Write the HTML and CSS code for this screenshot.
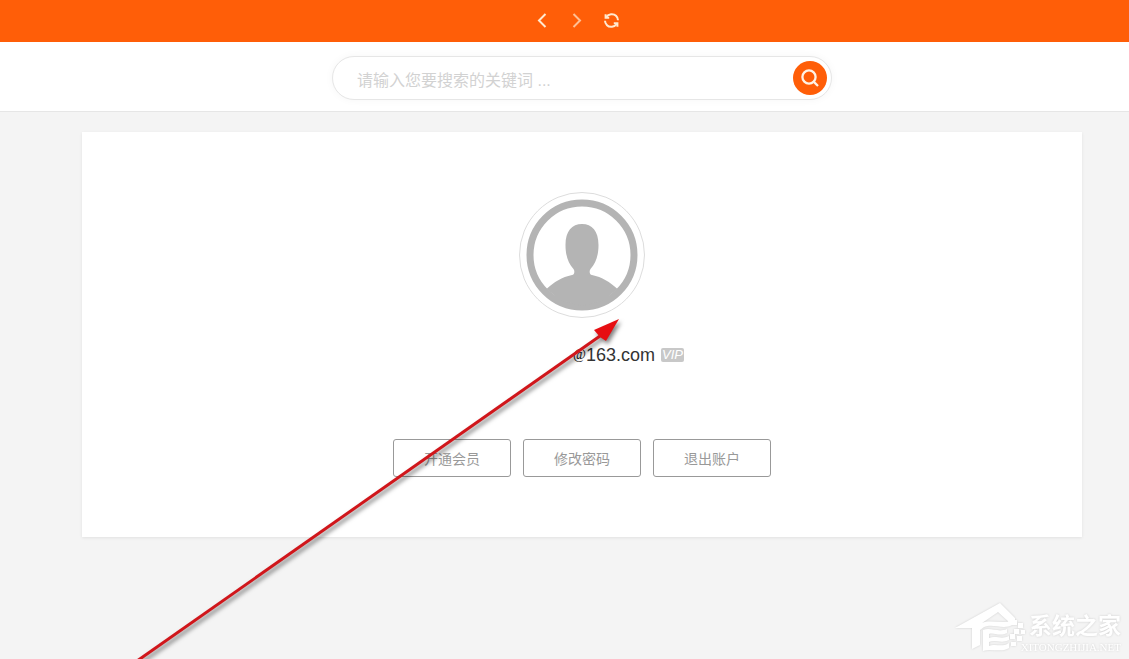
FILE: index.html
```html
<!DOCTYPE html>
<html lang="zh-CN">
<head>
    <meta charset="UTF-8">
    <meta name="viewport" content="width=device-width, initial-scale=1.0">
    <title>个人中心</title>
    <link rel="stylesheet" href="styles.css">
</head>
<body>
    <nav class="toolbar">
        <button type="button" class="tool" aria-label="后退">
            <svg width="16" height="16" viewBox="0 0 16 16"><path d="M11.500 1 5 7.500 11.500 14"/></svg>
        </button>
        <button type="button" class="tool tool-dim" aria-label="前进">
            <svg width="16" height="16" viewBox="0 0 16 16"><path d="M4.500 1 11 7.500 4.500 14"/></svg>
        </button>
        <button type="button" class="tool" aria-label="刷新">
            <svg width="16" height="16" viewBox="0 0 16 16">
                <path d="M2.200 4C4.500.8 9.500.2 12 2.800 13.400 4.200 14 5.600 14 7.200M12.800 11C10.500 14.200 5.500 14.800 3 12.200 1.600 10.800 1 9.400 1 7.800"/>
                <path d="M1.600 1.200V4.800H5.200M13.400 13.800V10.200H9.800"/>
            </svg>
        </button>
    </nav>

    <header class="header">
        <form class="search">
            <input type="text" class="search-input" aria-label="搜索" placeholder="请输入您要搜索的关键词 ...">
            <button type="button" class="search-btn" aria-label="搜索">
                <svg width="18" height="18" viewBox="0 0 18 18"><circle cx="8" cy="8" r="6.600"/><path d="M12.400 12.400 17 17"/></svg>
            </button>
        </form>
    </header>

    <main class="main">
        <section class="card">
            <div class="avatar">
                <svg width="112" height="112" viewBox="0 0 112 112">
                    <circle class="ring" cx="56" cy="56" r="52"/>
                    <path d="M20.500 90C28 83 36 78 46 76 48.500 75.500 49 72 47.500 70 42 64 39.500 56 39.500 46 39.500 32 46 25 56 25S72.500 32 72.500 46C72.500 56 70 64 64.500 70 63 72 63.500 75.500 66 76 76 78 84 83 91.500 90L78 101 56 107 34 101Z"/>
                </svg>
            </div>
            <div class="account">
                <span class="account-at">@</span><span>163.com</span>
                <span class="vip">VIP</span>
            </div>
            <div class="actions">
                <button type="button" class="btn">开通会员</button>
                <button type="button" class="btn">修改密码</button>
                <button type="button" class="btn">退出账户</button>
            </div>
        </section>
    </main>

    <svg class="arrow" width="520" height="360" viewBox="0 0 520 360">
        <path class="arrow-line" d="M27 350 490 25"/>
        <path class="arrow-head" d="M509 8 496 30 490 26 484 19Z"/>
    </svg>

    <div class="watermark">
        <svg width="72" height="52" viewBox="0 0 72 52">
            <path d="M0 26 45 1 60 16V20H54L43 10 27 21C36 17 48 23 57 18V23C48 28 38 21 29 25L25 28V43L17 47V26Z"/>
            <path d="M28 28C36 25 43 31 52 27V31C44 35 39 30 34 32V36C41 33 46 38 54 34V38C46 42 40 37 34 40V44C41 41 46 46 54 41V46C45 51 37 46 28 49Z"/>
            <path d="M57 18h5v5h-5zM63 21h5v5h-5zM59 27h5v5h-5zM66 28h4v4h-4zM55 32h5v5h-5zM62 34h5v5h-5zM56 40h5v4h-5z"/>
        </svg>
        <div class="watermark-text">
            <span class="watermark-name">系统之家</span>
            <span class="watermark-site">XITONGZHIJIA.NET</span>
        </div>
    </div>
</body>
</html>
```
FILE: styles.css
```css
* {
    box-sizing: border-box;
}

body {
    margin: 0;
    min-height: 100vh;
    position: relative;
    overflow: hidden;
    background: #f4f4f4;
    color: #333;
    font-family: "Liberation Sans", "Noto Sans CJK SC", sans-serif;
}

button {
    padding: 0;
    border: 0;
    background: none;
    font-family: inherit;
    cursor: pointer;
}

svg {
    display: block;
}

/* top bar */
.toolbar {
    display: flex;
    justify-content: center;
    align-items: center;
    gap: 19px;
    height: 42px;
    padding-left: 24px;
    background: #ff5e08;
}

.tool svg {
    fill: none;
    stroke: #ffe9d0;
    stroke-width: 2;
}

.tool-dim {
    opacity: 0.7;
}

/* search */
.header {
    display: flex;
    justify-content: center;
    padding: 14px 0 11px 35px;
    background: #fff;
    border-bottom: 1px solid #e6e6e6;
}

.search {
    display: flex;
    align-items: center;
    width: 500px;
    height: 44px;
    padding: 0 4px 0 24px;
    border: 1px solid #e6e6e6;
    border-radius: 22px;
    background: #fff;
    box-shadow: 0 0 8px rgba(0, 0, 0, 0.04);
}

.search-input {
    flex: 1;
    min-width: 0;
    height: 40px;
    padding: 6px 0 0;
    border: 0;
    outline: 0;
    background: none;
    font-family: inherit;
    font-size: 16px;
}

.search-input::placeholder {
    color: #d2d2d2;
}

.search-btn {
    display: flex;
    justify-content: center;
    align-items: center;
    width: 34px;
    height: 34px;
    border-radius: 50%;
    background: #ff5e08;
}

.search-btn svg {
    fill: none;
    stroke: #fff3e6;
    stroke-width: 2.3;
}

/* account card */
.main {
    display: flex;
    justify-content: center;
    padding: 20px 0 20px 35px;
}

.card {
    display: flex;
    flex-direction: column;
    align-items: center;
    width: 1000px;
    padding: 60px 20px;
    background: #fff;
    box-shadow: 0 1px 3px rgba(0, 0, 0, 0.08);
}

.avatar {
    padding: 6px;
    border: 1px solid #ddd;
    border-radius: 50%;
}

.avatar svg {
    fill: #b4b4b4;
}

.avatar .ring {
    fill: none;
    stroke: #b4b4b4;
    stroke-width: 7;
}

.account {
    display: flex;
    justify-content: flex-end;
    align-items: center;
    width: 204px;
    height: 24px;
    margin-top: 25px;
    font-size: 18px;
}

.account-at {
    color: #111;
    font-family: "Liberation Serif", serif;
    font-size: 14px;
}

.vip {
    margin-left: 6px;
    padding: 0 1px;
    border-radius: 2px;
    background: #c8c8c8;
    color: #fff;
    font-size: 13px;
    font-style: italic;
    line-height: 14px;
}

.actions {
    display: flex;
    gap: 12px;
    margin-top: 72px;
}

.btn {
    width: 118px;
    height: 38px;
    border: 1px solid #999;
    border-radius: 3px;
    background: #fff;
    color: #999;
    font-size: 14px;
}

/* pointer drawn over the page */
.arrow {
    position: absolute;
    left: 110px;
    bottom: -12px;
    filter: drop-shadow(2px 3px 2px rgba(0, 0, 0, 0.5));
    pointer-events: none;
}

.arrow-line {
    fill: none;
    stroke: #d0161b;
    stroke-width: 3;
}

.arrow-head {
    fill: #e60e12;
}

/* site mark in the corner */
.watermark {
    position: absolute;
    right: 8px;
    bottom: 5px;
    display: flex;
    align-items: flex-end;
    color: #fff;
    filter: drop-shadow(0 0 1px rgba(0, 0, 0, 0.15));
}

.watermark svg {
    fill: #fff;
}

.watermark-text {
    display: flex;
    flex-direction: column;
    align-items: flex-end;
    margin-left: -6px;
}

.watermark-name {
    font-size: 23px;
    font-weight: 700;
    line-height: 28px;
}

.watermark-site {
    font-family: "Liberation Serif", serif;
    font-size: 11px;
    line-height: 14px;
}
```
